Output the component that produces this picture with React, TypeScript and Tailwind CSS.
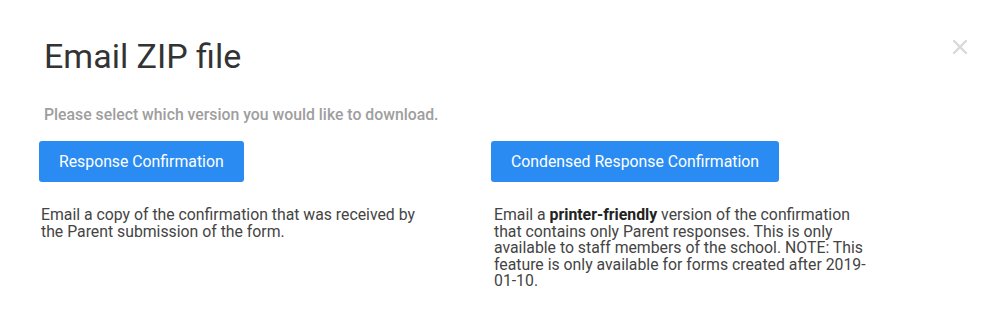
export default function App() {
  return (
    <div className="relative w-[999px] h-[335px] bg-white font-['Roboto',sans-serif] overflow-hidden">
      <button className="absolute right-[31px] top-[39px] text-[#d9d9d9]">
        <svg width="16" height="16" viewBox="0 0 16 16" fill="none" stroke="currentColor" strokeWidth="2.4" strokeLinecap="round">
          <path d="M2 2 L14 14 M14 2 L2 14" />
        </svg>
      </button>
      <div className="pl-[44px] pt-[35px]">
        <h1 className="text-[34px] leading-[42px] text-[#333] font-normal">Email ZIP file</h1>
        <p className="mt-[28px] text-[15.8px] leading-[19px] text-[#9e9e9e] font-medium">
          Please select which version you would like to download.
        </p>
      </div>
      <div className="flex pl-[39px] mt-[17px]">
        <div className="w-[452px]">
          <button className="h-[41px] px-[20px] rounded-[3px] bg-[#2a8cf2] text-white text-[15.8px] font-normal">
            Response Confirmation
          </button>
          <p className="mt-[25px] pl-[2px] w-[392px] text-[15.8px] leading-[16.5px] text-[#444]">
            Email a copy of the confirmation that was received by the Parent submission of the form.
          </p>
        </div>
        <div>
          <button className="h-[41px] px-[20px] rounded-[3px] bg-[#2a8cf2] text-white text-[15.8px] font-normal">
            Condensed Response Confirmation
          </button>
          <p className="mt-[25px] pl-[3px] w-[376px] text-[15.8px] leading-[16.5px] text-[#444]">
            Email a <b className="font-bold text-[#222]">printer-friendly</b> version of the confirmation that contains only
            Parent responses. This is only available to staff members of the school. NOTE: This feature is only
            available for forms created after 2019-01-10.
          </p>
        </div>
      </div>
    </div>
  );
}
